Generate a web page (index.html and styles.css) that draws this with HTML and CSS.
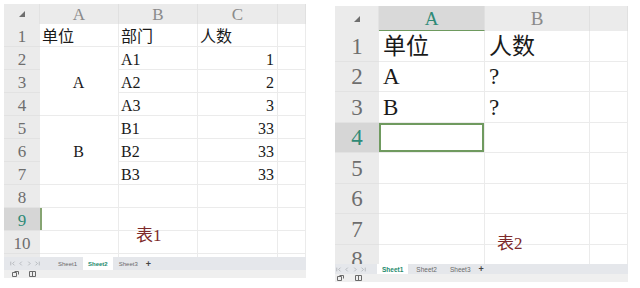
FILE: index.html
```html
<!DOCTYPE html>
<html lang="zh-CN">
<head>
<meta charset="utf-8">
<title>表1 与 表2</title>
<link rel="stylesheet" href="styles.css">
</head>
<body>
<div class="page">
  <section class="sheet sheet-left">
    <div class="grid grid-left">
      <div class="corner"><span class="tri"></span></div>
      <div class="ch">A</div><div class="ch">B</div><div class="ch">C</div><div class="ch"></div>

      <div class="rh">1</div><div class="c">单位</div><div class="c">部门</div><div class="c">人数</div><div class="c"></div>
      <div class="rh">2</div><div class="c merged">A</div><div class="c">A1</div><div class="c num">1</div><div class="c"></div>
      <div class="rh">3</div><div class="c">A2</div><div class="c num">2</div><div class="c"></div>
      <div class="rh">4</div><div class="c">A3</div><div class="c num">3</div><div class="c"></div>
      <div class="rh">5</div><div class="c merged">B</div><div class="c">B1</div><div class="c num">33</div><div class="c"></div>
      <div class="rh">6</div><div class="c">B2</div><div class="c num">33</div><div class="c"></div>
      <div class="rh">7</div><div class="c">B3</div><div class="c num">33</div><div class="c"></div>
      <div class="rh">8</div><div class="c"></div><div class="c"></div><div class="c"></div><div class="c"></div>
      <div class="rh rh-active">9</div><div class="c edge-mark"></div><div class="c"></div><div class="c"></div><div class="c"></div>
      <div class="rh">10</div><div class="c"></div><div class="c"></div><div class="c"></div><div class="c"></div>
      <div class="rh"></div><div class="c"></div><div class="c"></div><div class="c"></div><div class="c"></div>
    </div>
    <div class="tabs">
      <div class="nav">
        <svg viewBox="0 0 8 6"><path d="M1 0.5v5M6 0.5L3.5 3L6 5.5"/></svg>
        <svg viewBox="0 0 8 6"><path d="M5 0.5L2.5 3L5 5.5"/></svg>
        <svg viewBox="0 0 8 6"><path d="M3 0.5L5.5 3L3 5.5"/></svg>
        <svg viewBox="0 0 8 6"><path d="M2 0.5L4.5 3L2 5.5M7 0.5v5"/></svg>
      </div>
      <span class="tab">Sheet1</span>
      <span class="tab tab-on">Sheet2</span>
      <span class="tab">Sheet3</span>
      <span class="plus">+</span>
    </div>
    <div class="status">
      <svg viewBox="0 0 7 6"><path d="M0.5 1.5h4v4h-4zM2.5 0.5h4v3"/></svg>
      <svg viewBox="0 0 7 6"><path d="M0.5 0.5h6v5h-6zM3.5 0.5v5"/></svg>
    </div>
    <span class="note note-left">表1</span>
  </section>

  <section class="sheet sheet-right">
    <div class="grid grid-right">
      <div class="corner"><span class="tri"></span></div>
      <div class="ch ch-active">A</div><div class="ch">B</div><div class="ch"></div>

      <div class="rh">1</div><div class="c">单位</div><div class="c">人数</div><div class="c"></div>
      <div class="rh">2</div><div class="c">A</div><div class="c">?</div><div class="c"></div>
      <div class="rh">3</div><div class="c">B</div><div class="c">?</div><div class="c"></div>
      <div class="rh rh-active">4</div><div class="c active-cell"></div><div class="c"></div><div class="c"></div>
      <div class="rh">5</div><div class="c"></div><div class="c"></div><div class="c"></div>
      <div class="rh">6</div><div class="c"></div><div class="c"></div><div class="c"></div>
      <div class="rh">7</div><div class="c"></div><div class="c"></div><div class="c"></div>
      <div class="rh">8</div><div class="c"></div><div class="c"></div><div class="c"></div>
    </div>
    <div class="tabs">
      <div class="nav">
        <svg viewBox="0 0 8 6"><path d="M1 0.5v5M6 0.5L3.5 3L6 5.5"/></svg>
        <svg viewBox="0 0 8 6"><path d="M5 0.5L2.5 3L5 5.5"/></svg>
        <svg viewBox="0 0 8 6"><path d="M3 0.5L5.5 3L3 5.5"/></svg>
        <svg viewBox="0 0 8 6"><path d="M2 0.5L4.5 3L2 5.5M7 0.5v5"/></svg>
      </div>
      <span class="tab tab-on">Sheet1</span>
      <span class="tab">Sheet2</span>
      <span class="tab">Sheet3</span>
      <span class="plus">+</span>
    </div>
    <div class="status">
      <svg viewBox="0 0 7 6"><path d="M0.5 1.5h4v4h-4zM2.5 0.5h4v3"/></svg>
      <svg viewBox="0 0 7 6"><path d="M0.5 0.5h6v5h-6zM3.5 0.5v5"/></svg>
    </div>
    <span class="note note-right">表2</span>
  </section>
</div>
</body>
</html>
```

FILE: styles.css
```css
* { box-sizing: border-box; }

html, body {
  margin: 0;
  padding: 0;
  background: #ffffff;
}

body {
  width: 640px;
  height: 288px;
  overflow: hidden;
  font-family: "Liberation Serif", "Noto Sans CJK SC", serif;
  color: #1a1a1a;
}

.page {
  display: flex;
  align-items: flex-start;
}

.sheet {
  position: relative;
  display: flex;
  flex-direction: column;
  background: #ffffff;
}

.sheet-left {
  width: 302px;
  margin: 4px 0 0 4px;
}

.sheet-right {
  width: 293px;
  margin: 6px 0 0 29px;
}

.grid {
  display: grid;
  overflow: hidden;
}

.grid-left {
  height: 253px;
  grid-template-columns: 36px 79px 79px 80px 28px;
  grid-template-rows: 20px repeat(11, 23px);
  font-size: 16px;
}

.grid-right {
  height: 258px;
  grid-template-columns: 44px 106px 105px 38px;
  grid-template-rows: 25px repeat(8, 30.5px);
  font-size: 23px;
}

.corner, .ch, .rh {
  background: #ebebeb;
  color: #7a7a7a;
  display: flex;
  align-items: center;
  justify-content: center;
  line-height: 1;
}

.corner {
  border-right: 1px solid #e2e2e2;
}

.tri {
  width: 0;
  height: 0;
  border-left: 6px solid transparent;
  border-bottom: 6px solid #6e6e6e;
}

.ch {
  border-right: 1px solid #e0e0e0;
  color: #8a8a8a;
}

.grid-left .ch { font-size: 17px; }
.grid-right .ch { font-size: 19px; }

.ch-active {
  background: #d9d9d9;
  color: #2f8a76;
  border-bottom: 1px solid #6e9a5e;
}

.rh {
  border-bottom: 1px solid #e2e2e2;
  color: #6e6e6e;
}

.grid-left .rh { font-size: 17px; padding-top: 3px; }
.grid-right .rh { font-size: 23px; padding-top: 1px; }

.rh-active {
  background: #d6d6d6;
  color: #2f8a76;
}

.c {
  display: flex;
  align-items: center;
  padding: 0 3px 0 2px;
  border-right: 1px solid #ebebeb;
  border-bottom: 1px solid #ebebeb;
  line-height: 1;
  white-space: nowrap;
}

.grid-left .c { padding-top: 3px; }
.grid-right .c { padding-top: 1px; padding-left: 4px; }

.num {
  justify-content: flex-end;
}

.merged {
  grid-row: span 3;
  justify-content: center;
}

.edge-mark {
  box-shadow: inset 2px 0 0 #86a472;
}

.active-cell {
  box-shadow: inset 0 0 0 2px #6f9a5f;
}

.tabs {
  display: flex;
  align-items: stretch;
  background: #e5e7eb;
  font-family: "Liberation Sans", "Noto Sans", sans-serif;
  color: #6a6a6a;
}

.sheet-left .tabs {
  height: 13px;
  font-size: 6px;
  padding-left: 6px;
}

.sheet-right .tabs {
  height: 10px;
  font-size: 6.5px;
  padding-left: 1px;
}

.nav {
  display: flex;
  align-items: center;
  gap: 2px;
  width: 43px;
}

.sheet-right .nav { width: 41px; }

.nav svg {
  width: 6px;
  height: 5px;
  fill: none;
  stroke: #a8acb2;
  stroke-width: 1;
}

.tab {
  display: flex;
  align-items: center;
  padding: 0 5px;
}

.tab + .tab {
  margin-left: 1px;
}

.tab-on {
  background: #ffffff;
  color: #1d8a6c;
  font-weight: bold;
}

.sheet-right .tab { padding: 0 5px 0 5px; }
.sheet-right .tab + .tab { margin-left: 3px; }

.plus {
  display: flex;
  align-items: center;
  padding-left: 3px;
  font-size: 9px;
  font-weight: bold;
  color: #444;
}

.status {
  display: flex;
  align-items: center;
  gap: 10px;
  background: #efefef;
  padding-left: 8px;
}

.sheet-left .status { height: 8px; }
.sheet-right .status { height: 8px; padding-left: 2px; gap: 11px; }

.status svg {
  width: 7px;
  height: 6px;
  fill: none;
  stroke: #6a6a6a;
  stroke-width: 1;
}

.note {
  position: absolute;
  font-family: "Liberation Serif", "Noto Sans CJK SC", serif;
  color: #7d2a2a;
  line-height: 1;
}

.note-left {
  left: 132px;
  top: 223px;
  font-size: 17px;
}

.note-right {
  left: 162px;
  top: 229px;
  font-size: 17px;
}
```
